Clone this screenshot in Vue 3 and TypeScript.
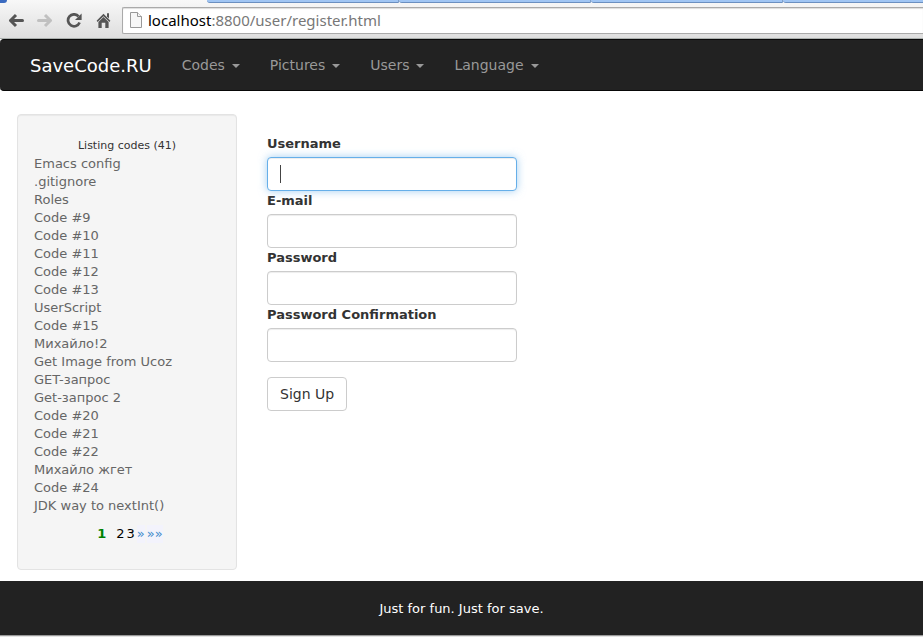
<script setup lang="ts">
import { ref } from 'vue'

interface Field {
  id: string
  label: string
  type: string
}

const menus: string[] = ['Codes', 'Pictures', 'Users', 'Language']

const codes: string[] = [
  'Emacs config', '.gitignore', 'Roles', 'Code #9', 'Code #10', 'Code #11',
  'Code #12', 'Code #13', 'UserScript', 'Code #15', 'Михайло!2',
  'Get Image from Ucoz', 'GET-запрос', 'Get-запрос 2', 'Code #20', 'Code #21',
  'Code #22', 'Михайло жгет', 'Code #24', 'JDK way to nextInt()',
]

const fields: Field[] = [
  { id: 'username', label: 'Username', type: 'text' },
  { id: 'email', label: 'E-mail', type: 'email' },
  { id: 'password', label: 'Password', type: 'password' },
  { id: 'confirmation', label: 'Password Confirmation', type: 'password' },
]

const values = ref<Record<string, string>>({ username: '', email: '', password: '', confirmation: '' })
const active = ref<string>('username')
</script>

<template>
  <div class="window">
    <header class="browser">
      <div class="tabs" aria-hidden="true">
        <span class="tab-previous"></span>
        <span class="tab-current"></span>
        <span class="tab"></span>
        <span class="tab"></span>
        <span class="tab"></span>
        <span class="tab tab-last"></span>
      </div>
      <div class="toolbar">
        <button class="tool" type="button" aria-label="Back">
          <svg width="16" height="16" viewBox="0 0 16 16" fill="none" stroke="#555" stroke-width="3">
            <path d="M3 7.5H14.5" stroke-linecap="round" /><path d="M8 2L2.5 7.5L8 13" stroke-linejoin="round" />
          </svg>
        </button>
        <button class="tool" type="button" aria-label="Forward">
          <svg width="16" height="16" viewBox="0 0 16 16" fill="none" stroke="#c0c0c0" stroke-width="3">
            <path d="M1.5 7.5H13" stroke-linecap="round" /><path d="M8 2L13.5 7.5L8 13" stroke-linejoin="round" />
          </svg>
        </button>
        <button class="tool" type="button" aria-label="Reload">
          <svg width="16" height="16" viewBox="0 0 16 16">
            <path d="M12.6 3.4A6 6 0 1 0 13.6 9.6" fill="none" stroke="#555" stroke-width="2.7" />
            <path d="M15.6 .4V7H9Z" fill="#555" />
          </svg>
        </button>
        <button class="tool" type="button" aria-label="Home">
          <svg width="16" height="16" viewBox="0 0 16 16" fill="#555">
            <path d="M8.5 .8L15.4 7.7L14.4 8.9L8.5 3.2L2.6 8.9L1.6 7.7Z" />
            <path d="M8.5 4L13.6 9V15H10.3V9.8H6.7V15H3.4V9Z" />
            <path d="M12 .3H14V5.4L12 3.4Z" />
          </svg>
        </button>
        <div class="address">
          <svg width="12" height="16" viewBox="0 0 12 16" fill="#f7f7f7" stroke="#999">
            <path d="M.5 .5H7.5L11.5 4.5V15.5H.5Z" /><path d="M7.5 .5V4.5H11.5" />
          </svg>
          <span class="url"><span class="host">localhost</span>:8800/user/register.html</span>
        </div>
      </div>
    </header>

    <nav class="navbar">
      <a class="brand" href="#">SaveCode.RU</a>
      <a v-for="menu in menus" :key="menu" class="menu" href="#">{{ menu }}<span class="caret"></span></a>
    </nav>

    <main class="content">
      <aside class="sidebar">
        <h2 class="listing">Listing codes (41)</h2>
        <ul class="codes">
          <li v-for="code in codes" :key="code"><a href="#">{{ code }}</a></li>
        </ul>
        <div class="pager">
          <b class="current">1</b>
          <a href="#">2</a>
          <a href="#">3</a>
          <a class="jump" href="#">»</a>
          <a class="jump" href="#">»»</a>
        </div>
      </aside>

      <form class="register" @submit.prevent>
        <div v-for="field in fields" :key="field.id" class="field">
          <label :for="field.id">{{ field.label }}</label>
          <div class="control">
            <input
              :id="field.id"
              v-model="values[field.id]"
              :type="field.type"
              :class="{ active: active === field.id }"
              @focus="active = ''"
            >
            <span v-if="active === field.id" class="cursor"></span>
          </div>
        </div>
        <button class="submit" type="submit">Sign Up</button>
      </form>
    </main>

    <footer class="footer">Just for fun. Just for save.</footer>
    <div class="frame"></div>
  </div>
</template>

<style>
body {
  margin: 0;
  background: #fff;
}
</style>

<style scoped>
.window {
  display: flex;
  flex-direction: column;
  min-height: 100vh;
  font-family: "DejaVu Sans", sans-serif;
  font-size: 13px;
  line-height: 18px;
  color: #333;
}
.window * {
  box-sizing: border-box;
}
a {
  color: inherit;
  text-decoration: none;
}
.browser {
  background: linear-gradient(#f8f8f8, #dedede);
  border-bottom: 1px solid #aaafad;
}
.tabs {
  display: flex;
  height: 3px;
}
.tab-previous {
  width: 7px;
  background: #3b6bc0;
  border-bottom-right-radius: 4px;
}
.tab-current {
  width: 200px;
}
.tab {
  width: 192px;
  background: #a0c5f3;
  border-bottom: 1px solid #6b8fc0;
  border-right: 1px solid #7f9fca;
  border-bottom-left-radius: 3px;
}
.tab-last {
  flex: 1;
  border-right: 0;
}
.toolbar {
  display: flex;
  align-items: center;
  height: 35px;
  padding-left: 8px;
}
.tool {
  display: flex;
  margin: 0 13px 0 0;
  padding: 0;
  border: 0;
  background: none;
}
.address {
  display: flex;
  flex: 1;
  align-items: center;
  gap: 6px;
  height: 27px;
  margin-left: -2px;
  padding: 0 0 2px 7px;
  border: 1px solid #aaa;
  border-right: 0;
  border-radius: 2px 0 0 2px;
  background: #fff;
  box-shadow: inset 0 1px 1px #ddd;
}
.url {
  font-family: "Noto Sans", sans-serif;
  font-size: 15px;
  color: #777;
}
.host {
  color: #000;
}
.navbar {
  display: flex;
  align-items: center;
  gap: 30px;
  height: 52px;
  padding-left: 30px;
  border: 1px solid #080808;
  border-width: 1px 0;
  border-radius: 4px 0 0 4px;
  background: #222;
  font-size: 14px;
  color: #999;
}
.brand {
  padding-top: 2px;
  font-size: 18px;
  color: #fff;
}
.menu {
  display: flex;
  align-items: center;
  gap: 7px;
}
.caret {
  margin-top: 2px;
  border: 4px solid transparent;
  border-top-color: #999;
  border-bottom: 0;
}
.content {
  display: flex;
  flex: 1;
  align-items: flex-start;
  gap: 30px;
  padding: 23px 17px 11px;
}
.sidebar {
  width: 220px;
  padding: 22px 16px 26px;
  border: 1px solid #e3e3e3;
  border-radius: 4px;
  background: #f5f5f5;
  box-shadow: inset 0 1px 1px rgba(0, 0, 0, 0.05);
}
.listing {
  margin: 0;
  font-size: 11px;
  font-weight: 400;
  text-align: center;
}
.codes {
  margin: 0;
  padding: 0;
  list-style: none;
  color: #666;
}
.pager {
  display: flex;
  justify-content: center;
  gap: 2px;
  margin-top: 10px;
  padding-left: 6px;
  color: #000;
}
.current {
  margin-right: 8px;
  color: #008000;
}
.jump {
  color: #428bca;
  background: #f3f3fc;
}
.register {
  flex: 1;
  padding-top: 20px;
}
.field label {
  display: block;
  padding: 1px 0 4px;
  font-weight: 700;
}
.control {
  position: relative;
  max-width: 250px;
}
.control input {
  display: block;
  width: 100%;
  height: 34px;
  padding: 6px 12px;
  border: 1px solid #ccc;
  border-radius: 4px;
  background: #fff;
  box-shadow: inset 0 1px 1px rgba(0, 0, 0, 0.075);
  font: inherit;
  color: #555;
}
.control input:focus,
.control input.active {
  outline: 0;
  border-color: #66afe9;
  box-shadow: inset 0 1px 1px rgba(0, 0, 0, 0.075), 0 0 8px rgba(102, 175, 233, 0.6);
}
.cursor {
  position: absolute;
  top: 8px;
  left: 13px;
  width: 1px;
  height: 18px;
  background: #444;
}
.submit {
  margin-top: 15px;
  padding: 7px 12px;
  border: 1px solid #ccc;
  border-radius: 4px;
  background: #fff;
  font-family: inherit;
  font-size: 14px;
  line-height: 18px;
  color: #333;
}
.footer {
  padding: 19px 18px 17px;
  background: #222;
  color: #fff;
  text-align: center;
}
.frame {
  height: 2px;
  border-top: 1px solid #999;
  background: #e4e4e4;
}
</style>
